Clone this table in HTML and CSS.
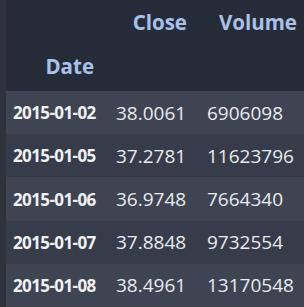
FILE: index.html
```html
<!DOCTYPE html>
<html>
<head>
<meta charset="utf-8">
<link rel="stylesheet" href="styles.css">
</head>
<body>
<div class="frame">
  <div class="strip"></div>
  <div class="table">
    <div class="head">
      <div class="hcell idx"></div>
      <div class="hcell col2">Close</div>
      <div class="hcell col3">Volume</div>
      <div class="hcell idx low">Date</div>
      <div class="hcell col2"></div>
      <div class="hcell col3"></div>
    </div>
    <div class="row odd"><div class="cell date">2015-01-02</div><div class="cell close">38.0061</div><div class="cell vol">6906098</div></div>
    <div class="row even"><div class="cell date">2015-01-05</div><div class="cell close">37.2781</div><div class="cell vol">11623796</div></div>
    <div class="row odd"><div class="cell date">2015-01-06</div><div class="cell close">36.9748</div><div class="cell vol">7664340</div></div>
    <div class="row even"><div class="cell date">2015-01-07</div><div class="cell close">37.8848</div><div class="cell vol">9732554</div></div>
    <div class="row odd"><div class="cell date">2015-01-08</div><div class="cell close">38.4961</div><div class="cell vol">13170548</div></div>
  </div>
</div>
</body>
</html>
```

FILE: styles.css
```css
html, body {
  margin: 0;
  padding: 0;
  background: #262c37;
}
.frame {
  display: flex;
  width: 304px;
  height: 307px;
  overflow: hidden;
  font-family: "Open Sans", sans-serif;
}
.strip {
  width: 6px;
  flex: none;
  background: #2d323d;
}
.table {
  flex: 1;
  display: flex;
  flex-direction: column;
}
.head {
  display: grid;
  grid-template-columns: 101px 92px 1fr;
  grid-template-rows: 45.5px 45.5px;
  background: #262c37;
}
.hcell {
  color: #a9c1ea;
  font-weight: 700;
  font-size: 20.5px;
  text-align: right;
  line-height: 45px;
}
.hcell.low { line-height: 41px; }
.hcell.idx { padding-right: 13px; }
.hcell.col2 { padding-right: 12px; }
.hcell.col3 { padding-right: 7px; }
.row {
  display: grid;
  grid-template-columns: 101px 92px 1fr;
  height: 43.75px;
  align-items: center;
}
.odd { background: #3e4452; }
.even { background: #363c4a; }
.cell {
  color: #e9eaee;
  font-size: 19px;
  white-space: nowrap;
}
.date {
  font-weight: 700;
  font-size: 17px;
  letter-spacing: -0.6px;
  padding-left: 7px;
  color: #f0f1f4;
}
.close { padding-left: 9px; }
.vol { padding-left: 8px; }
```
